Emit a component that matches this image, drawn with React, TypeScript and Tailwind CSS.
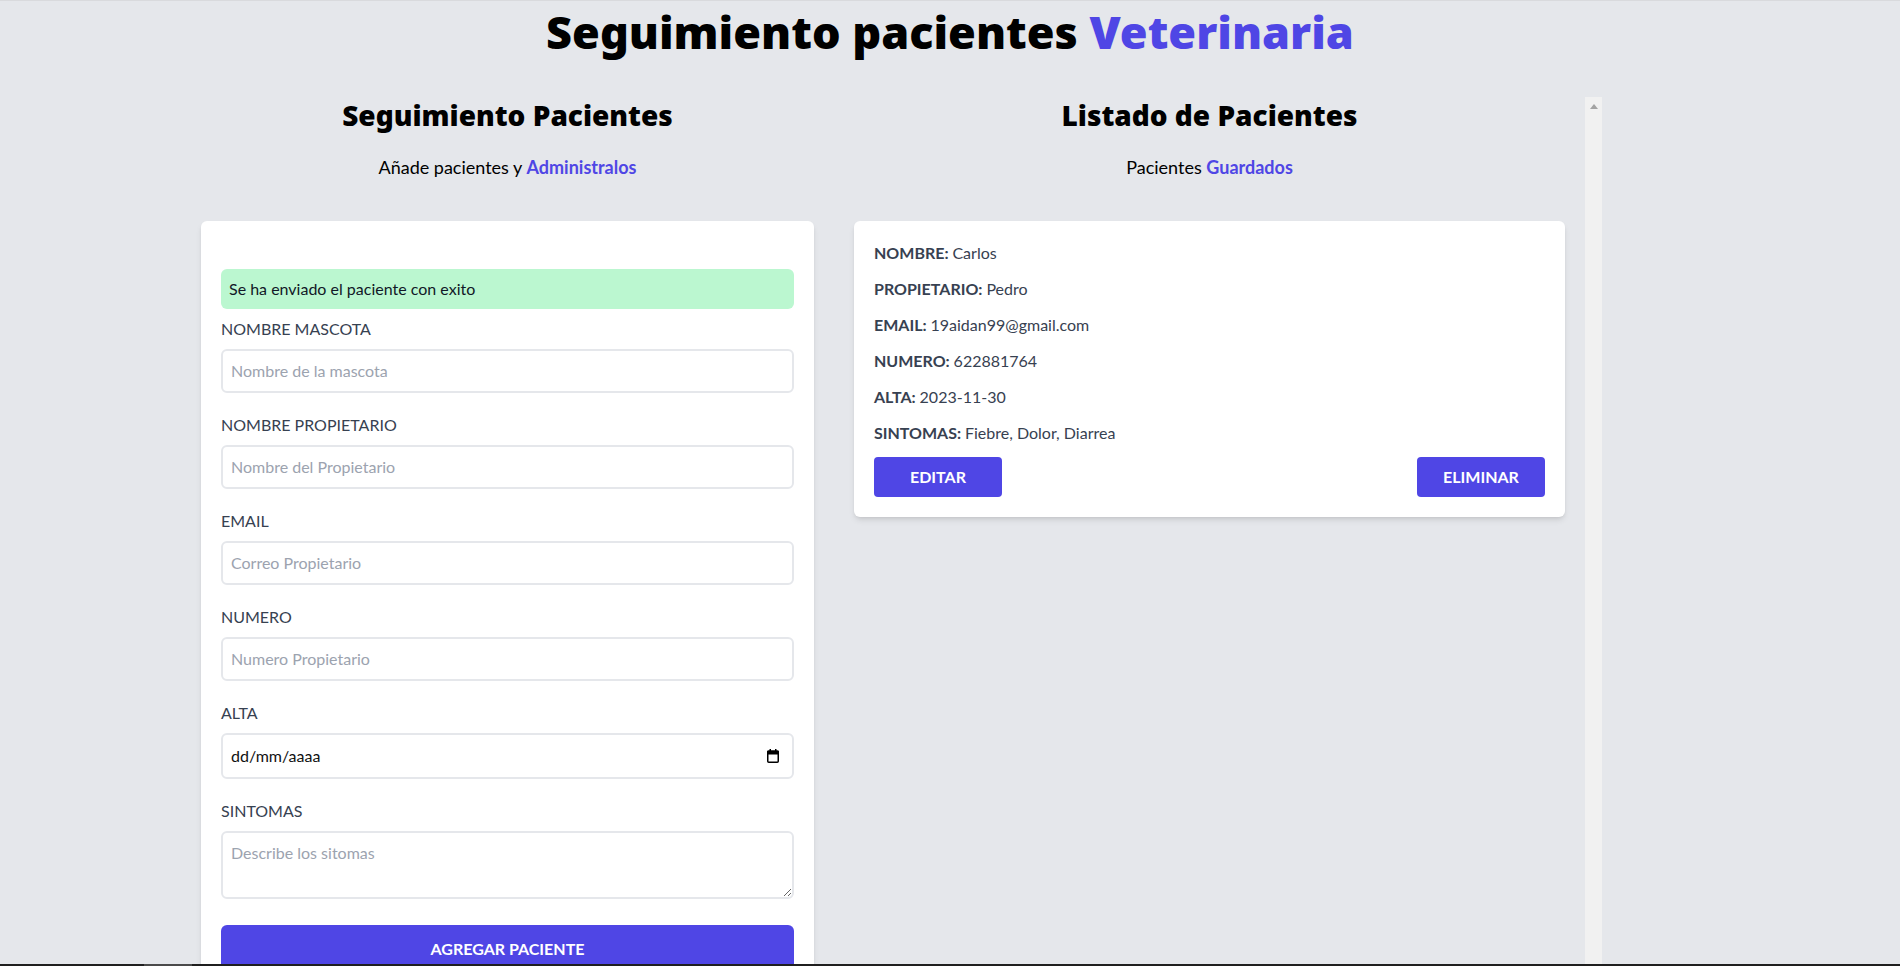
import React from "react";

function Field({ label, placeholder }: { label: string; placeholder: string }) {
  return (
    <div className="mb-5">
      <label className="block text-[#374151] uppercase leading-6">{label}</label>
      <input
        type="text"
        placeholder={placeholder}
        className="block border-2 border-[#e5e7eb] w-full p-2 mt-2 placeholder-[#9ca3af] rounded-md leading-6 outline-none"
      />
    </div>
  );
}

function CalendarIcon() {
  return (
    <svg width="12" height="14" viewBox="0 0 12 14" fill="none">
      <rect x="0.75" y="2.25" width="10.5" height="11" rx="1" stroke="#000" strokeWidth="1.5" />
      <rect x="0" y="1.5" width="12" height="4" rx="1" fill="#000" />
      <rect x="2.5" y="0" width="1.5" height="2" fill="#000" />
      <rect x="8" y="0" width="1.5" height="2" fill="#000" />
    </svg>
  );
}

function Row({ k, v }: { k: string; v: string }) {
  return (
    <p className="font-bold mb-3 text-[#374151] uppercase leading-6">
      {k}: <span className="font-normal normal-case">{v}</span>
    </p>
  );
}

export default function App() {
  return (
    <div className="relative w-[1900px] h-[966px] overflow-hidden bg-[#e5e7eb] flex flex-col border-t border-[#d9dadd] font-['Lato','Noto_Sans',sans-serif] text-black">
      <h1 className="text-[45px] leading-[62px] font-black text-center font-['Noto_Sans',sans-serif]">
        Seguimiento pacientes <span className="text-[#4f46e5]">Veterinaria</span>
      </h1>

      <div className="mt-[34px] flex flex-1 min-h-0 pl-[181px]">
        {/* Form column */}
        <div className="w-[653px] shrink-0">
          <h2 className="font-black text-[28px] text-center leading-9 font-['Noto_Sans',sans-serif]">
            Seguimiento Pacientes
          </h2>
          <p className="text-lg mt-5 text-center mb-10 leading-7">
            Añade pacientes y <span className="text-[#4f46e5] font-bold">Administralos</span>
          </p>

          <form className="bg-white shadow-md rounded-md mx-5 pt-12 px-5 pb-10">
            <div className="bg-[#bbf7d0] text-[#111827] p-2 rounded-md mb-2 leading-6">
              Se ha enviado el paciente con exito
            </div>

            <Field label="Nombre Mascota" placeholder="Nombre de la mascota" />
            <Field label="Nombre Propietario" placeholder="Nombre del Propietario" />
            <Field label="Email" placeholder="Correo Propietario" />
            <Field label="Numero" placeholder="Numero Propietario" />

            <div className="mb-5">
              <label className="block text-[#374151] uppercase leading-6">Alta</label>
              <div className="mt-2 h-[46px] border-2 border-[#e5e7eb] rounded-md flex items-center justify-between pl-2 pr-[13px]">
                <span className="leading-6 text-[#111]">dd/mm/aaaa</span>
                <CalendarIcon />
              </div>
            </div>

            <div className="mb-[26px]">
              <label className="block text-[#374151] uppercase leading-6">Sintomas</label>
              <textarea
                rows={2}
                placeholder="Describe los sitomas"
                className="block border-2 border-[#e5e7eb] w-full p-2 mt-2 placeholder-[#9ca3af] rounded-md leading-6 h-[68px] outline-none"
              />
            </div>

            <button
              type="button"
              className="bg-[#4f46e5] w-full p-3 text-white uppercase font-bold rounded-md leading-6"
            >
              Agregar Paciente
            </button>
          </form>
        </div>

        {/* List column */}
        <div className="w-[768px] shrink-0 flex">
          <div className="flex-1">
            <h2 className="font-black text-[28px] text-center leading-9 font-['Noto_Sans',sans-serif]">
              Listado de Pacientes
            </h2>
            <p className="text-lg mt-5 text-center mb-10 leading-7">
              Pacientes <span className="text-[#4f46e5] font-bold">Guardados</span>
            </p>

            <div className="mx-5 bg-white shadow-md rounded-md p-5">
              <Row k="Nombre" v="Carlos" />
              <Row k="Propietario" v="Pedro" />
              <Row k="Email" v="19aidan99@gmail.com" />
              <Row k="Numero" v="622881764" />
              <Row k="Alta" v="2023-11-30" />
              <Row k="Sintomas" v="Fiebre, Dolor, Diarrea" />
              <div className="flex justify-between">
                <button type="button" className="w-32 py-2 bg-[#4f46e5] text-white font-bold uppercase rounded leading-6">
                  Editar
                </button>
                <button type="button" className="w-32 py-2 bg-[#4f46e5] text-white font-bold uppercase rounded leading-6">
                  Eliminar
                </button>
              </div>
            </div>
          </div>

          {/* scrollbar */}
          <div className="w-[17px] bg-[#f1f1f1] flex justify-center pt-[7px]">
            <svg width="8" height="5" viewBox="0 0 8 5">
              <polygon points="4,0 8,5 0,5" fill="#a3a3a3" />
            </svg>
          </div>
        </div>
      </div>

      {/* taskbar edge */}
      <div className="absolute left-0 right-0 bottom-0 h-[2px] bg-[#1f1f1f]">
        <div className="ml-[144px] w-[48px] h-full bg-[#4a4a4a]" />
      </div>
    </div>
  );
}
